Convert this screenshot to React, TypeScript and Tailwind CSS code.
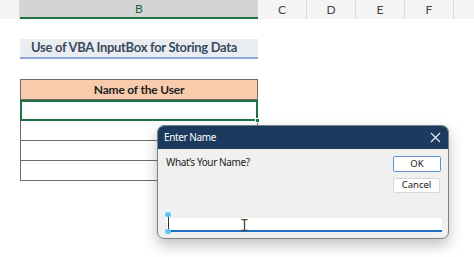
import React from 'react';

const cols = ['C', 'D', 'E', 'F'];

export default function App() {
  return (
    <div className="relative w-[474px] h-[257px] overflow-hidden bg-white" style={{ fontFamily: 'Lato, "Open Sans", sans-serif' }}>
      {/* column header strip */}
      <div className="flex h-[19px] bg-[#f4f4f4] text-[12px] text-[#444]">
        <div className="w-[20px] border-r border-[#dcdcdc]" />
        <div className="w-[238px] flex items-center justify-center bg-[#d4d4d4] border-b-2 border-[#217346] text-[#215f3a]">B</div>
        {cols.map((c) => (
          <div key={c} className="w-[49px] flex items-center justify-center border-r border-[#dcdcdc]">{c}</div>
        ))}
      </div>

      {/* sheet content */}
      <div className="pl-[20px] pt-[20px] w-[258px]">
        <div className="h-[20px] flex items-center pl-[11px] bg-[#e9edf2] border-b-2 border-[#8ea9db] text-[13px] tracking-[-0.3px] whitespace-nowrap font-bold text-[#3a4a5c]">
          Use of VBA InputBox for Storing Data
        </div>
        <div className="mt-[20px] border border-[#6b6b6b]">
          <div className="h-[20px] flex items-center justify-center bg-[#f8cbad] border-b border-[#6b6b6b] text-[12px] tracking-[-0.2px] font-bold text-[#222]">
            Name of the User
          </div>
          <div className="relative h-[21px] border-2 border-[#217346] -mx-px">
            <div className="absolute -right-[4px] -bottom-[4px] w-[5px] h-[5px] bg-[#217346] border border-white" />
          </div>
          <div className="h-[20px] border-b border-[#6b6b6b]" />
          <div className="h-[20px] border-b border-[#6b6b6b]" />
          <div className="h-[19px]" />
        </div>
      </div>

      {/* InputBox dialog */}
      <div
        className="absolute left-[157px] top-[125px] w-[292px] h-[114px] rounded-[7px] border border-[#7a7f88] bg-[#f0f0f0] shadow-[0_6px_14px_rgba(0,0,0,0.25)] overflow-hidden flex flex-col"
        style={{ fontFamily: '"Noto Sans", "Open Sans", sans-serif' }}
      >
        <div className="h-[23px] shrink-0 bg-[#1b3a5e] flex items-center justify-between pl-[6px] pr-[7px] text-white text-[10px] tracking-[-0.4px]">
          <span>Enter Name</span>
          <svg width="11" height="11" viewBox="0 0 11 11" stroke="#e6ebf2" strokeWidth="1.2">
            <path d="M1 1L10 10M10 1L1 10" />
          </svg>
        </div>
        <div className="flex-1 relative">
          <div className="flex justify-between pl-[8px] pr-[7px] pt-[6px]">
            <span className="text-[10px] tracking-[-0.4px] text-[#222]">What’s Your Name?</span>
            <div className="flex flex-col gap-[6px] pt-[1px]">
              <div className="w-[48px] h-[16px] bg-white border border-[#5b8fd0] rounded-[2px] flex items-center justify-center text-[9.5px] text-[#222]">OK</div>
              <div className="w-[47px] h-[15px] bg-white border border-[#d8d8d8] rounded-[2px] flex items-center justify-center text-[9.5px] text-[#222]">Cancel</div>
            </div>
          </div>
          <div className="absolute left-[9px] top-[69px] w-[275px] h-[14px] bg-white border-b-2 border-[#1f6fc5]" />
          {/* selection caret handles */}
          <div className="absolute left-[9.5px] top-[66px] w-px h-[15px] bg-[#333]" />
          <div className="absolute left-[7px] top-[63px] w-[6px] h-[5px] rounded-full bg-[#5ec6f7]" />
          <div className="absolute left-[7px] top-[80px] w-[6px] h-[5px] rounded-full bg-[#5ec6f7]" />
          {/* I-beam cursor */}
          <svg className="absolute left-[83px] top-[70px]" width="7" height="12" viewBox="0 0 7 12" stroke="#4a4a2a" strokeWidth="1.3" fill="none">
            <path d="M0.5 0.7H6.5M3.5 0.7V11.3M0.5 11.3H6.5" />
          </svg>
        </div>
      </div>
    </div>
  );
}
